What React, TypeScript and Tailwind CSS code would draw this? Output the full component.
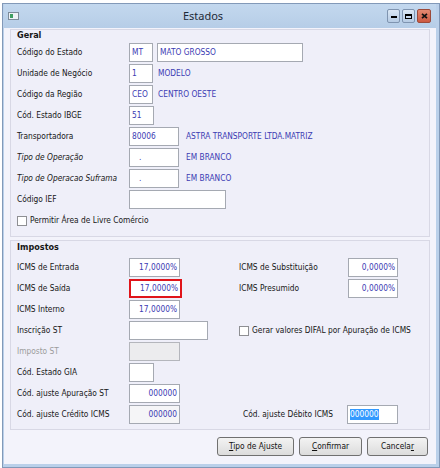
import React from "react";

function Box({
  className = "",
  border = "border border-[#a5a9b2]",
  children,
}: {
  className?: string;
  border?: string;
  children?: React.ReactNode;
}) {
  return (
    <div
      className={`h-[19px] shrink-0 ${border} flex items-center px-[2px] text-[#3b3bb3] whitespace-nowrap overflow-hidden ${className}`}
    >
      {children}
    </div>
  );
}

function Check() {
  return <div className="w-[10px] h-[10px] shrink-0 border border-[#8e8f93] bg-white" />;
}

function Row({
  label,
  italic,
  muted,
  children,
}: {
  label: string;
  italic?: boolean;
  muted?: boolean;
  children?: React.ReactNode;
}) {
  return (
    <div className="flex items-center h-[19px]">
      <div className={`w-[112px] shrink-0 whitespace-nowrap ${italic ? "italic" : ""} ${muted ? "text-[#9c9c9c]" : ""}`}>
        {label}
      </div>
      {children}
    </div>
  );
}

function Value({ children }: { children: React.ReactNode }) {
  return <span className="text-[#3b3bb3] whitespace-nowrap">{children}</span>;
}

export default function App() {
  return (
    <div className="w-[440px] h-[468px] bg-white pt-[3px] pl-[2px] overflow-hidden font-['DejaVu_Sans_Condensed','Liberation_Sans',sans-serif] text-[8.3px] text-[#161616]">
      {/* window frame */}
      <div className="w-[438px] h-[465px] border border-[#8299b8] bg-[#bad0ea] pl-[1px] pr-[3px] pb-[3px] flex flex-col">
        {/* title bar */}
        <div className="h-[24px] flex items-center pl-[4px] pr-[5px] bg-linear-to-b from-[#c3d8ee] to-[#b6cde7]">
          <svg width="11" height="8" viewBox="0 0 11 8" className="shrink-0">
            <rect x="0.5" y="0.5" width="10" height="7" fill="#eef2f6" stroke="#7d8b99" />
            <rect x="2" y="2" width="3" height="4" fill="#3f9e62" />
          </svg>
          <div className="flex-1 text-center font-['Noto_Sans',sans-serif] text-[11px] text-[#1e2a38]">Estados</div>
          <div className="flex items-center gap-[2px]">
            <div className="w-[13px] h-[14px] rounded-[2px] border border-[#7f94b0] bg-linear-to-b from-[#dbe7f4] to-[#b6cbe4] flex items-end justify-center pb-[4px]">
              <div className="w-[6px] h-[2px] bg-black" />
            </div>
            <div className="w-[13px] h-[14px] rounded-[2px] border border-[#7f94b0] bg-linear-to-b from-[#dbe7f4] to-[#b6cbe4] flex items-center justify-center">
              <div className="w-[7px] h-[5px] border border-black border-t-2" />
            </div>
            <div className="w-[14px] h-[14px] rounded-[2px] border border-[#9c4a3a] bg-linear-to-b from-[#e48a72] to-[#cc5840] flex items-center justify-center">
              <svg width="7" height="6" viewBox="0 0 7 6">
                <path d="M1 0.8 L6 5.2 M6 0.8 L1 5.2" stroke="#111" strokeWidth="1.7" />
              </svg>
            </div>
          </div>
        </div>

        {/* client area */}
        <div className="flex-1 bg-[#f3f3fb] flex flex-col">
          {/* Geral */}
          <div className="ml-[6px] mt-[1px] w-[420px] h-[208px] border border-[#d8d8e5] bg-[#efeff9] pl-[6px]">
            <div className="h-[13px] leading-[10px] font-bold text-[9px]">Geral</div>
            <div className="flex flex-col gap-[2px]">
              <Row label="Código do Estado">
                <Box className="w-[24px] bg-white">MT</Box>
                <Box className="w-[146px] ml-[4px] bg-white">MATO GROSSO</Box>
              </Row>
              <Row label="Unidade de Negócio">
                <Box className="w-[24px] bg-white">1</Box>
                <span className="ml-[5px]"><Value>MODELO</Value></span>
              </Row>
              <Row label="Código da Região">
                <Box className="w-[24px] bg-white">CEO</Box>
                <span className="ml-[5px]"><Value>CENTRO OESTE</Value></span>
              </Row>
              <Row label="Cód. Estado IBGE">
                <Box className="w-[25px] bg-white">51</Box>
              </Row>
              <Row label="Transportadora">
                <Box className="w-[50px] bg-white">80006</Box>
                <span className="ml-[7px]"><Value>ASTRA TRANSPORTE LTDA.MATRIZ</Value></span>
              </Row>
              <Row label="Tipo de Operação" italic>
                <Box className="w-[50px] pl-[9px] bg-white">.</Box>
                <span className="ml-[7px]"><Value>EM BRANCO</Value></span>
              </Row>
              <Row label="Tipo de Operacao Suframa" italic>
                <Box className="w-[50px] pl-[9px] bg-white">.</Box>
                <span className="ml-[7px]"><Value>EM BRANCO</Value></span>
              </Row>
              <Row label="Código IEF">
                <Box className="w-[97px] bg-white" />
              </Row>
              <div className="flex items-center h-[19px] gap-[3px]">
                <Check />
                <span>Permitir Área de Livre Comércio</span>
              </div>
            </div>
          </div>

          {/* Impostos */}
          <div className="ml-[6px] mt-[3px] w-[420px] h-[190px] border border-[#d8d8e5] bg-[#efeff9] pl-[6px]">
            <div className="h-[17px] leading-[12px] font-bold text-[9px]">Impostos</div>
            <div className="flex flex-col gap-[2px]">
              <div className="flex items-center h-[19px]">
                <div className="w-[222px] shrink-0">
                  <Row label="ICMS de Entrada">
                    <Box className="w-[51px] justify-end bg-white">17,0000%</Box>
                  </Row>
                </div>
                <div className="w-[109px] shrink-0">ICMS de Substituição</div>
                <Box className="w-[50px] justify-end bg-white">0,0000%</Box>
              </div>
              <div className="flex items-center h-[19px]">
                <div className="w-[222px] shrink-0">
                  <Row label="ICMS de Saída">
                    <Box className="w-[53px] justify-end bg-white" border="border-[2px] border-[#e0141a]">
                      17,0000%
                    </Box>
                  </Row>
                </div>
                <div className="w-[109px] shrink-0">ICMS Presumido</div>
                <Box className="w-[50px] justify-end bg-white">0,0000%</Box>
              </div>
              <Row label="ICMS Interno">
                <Box className="w-[51px] justify-end bg-white">17,0000%</Box>
              </Row>
              <div className="flex items-center h-[19px]">
                <div className="w-[222px] shrink-0">
                  <Row label="Inscrição ST">
                    <Box className="w-[79px] bg-white" />
                  </Row>
                </div>
                <div className="flex items-center gap-[3px]">
                  <Check />
                  <span className="whitespace-nowrap">Gerar valores DIFAL por Apuração de ICMS</span>
                </div>
              </div>
              <Row label="Imposto ST" muted>
                <Box className="w-[51px] bg-[#ececee]" border="border border-[#b4b6bc]" />
              </Row>
              <Row label="Cód. Estado GIA">
                <Box className="w-[25px] bg-white" />
              </Row>
              <Row label="Cód. ajuste Apuração ST">
                <Box className="w-[51px] justify-end bg-white">000000</Box>
              </Row>
              <div className="flex items-center h-[19px]">
                <div className="w-[222px] shrink-0">
                  <Row label="Cód. ajuste Crédito ICMS">
                    <Box className="w-[51px] justify-end bg-[#f5f5f7]">000000</Box>
                  </Row>
                </div>
                <div className="w-[108px] shrink-0 pl-[4px] whitespace-nowrap">Cód. ajuste Débito ICMS</div>
                <Box className="w-[51px] bg-white">
                  <span className="bg-[#3399ff] text-white leading-[11px]">000000</span>
                </Box>
              </div>
            </div>
          </div>

          {/* buttons */}
          <div className="mt-[7px] flex justify-end gap-[5px] pr-[8px]">
            <button className="h-[19px] w-[77px] border border-[#707070] rounded-[3px] bg-linear-to-b from-[#f3f3f3] to-[#dcdcdc] text-[#111]">
              <span className="underline">T</span>ipo de Ajuste
            </button>
            <button className="h-[19px] w-[63px] border border-[#707070] rounded-[3px] bg-linear-to-b from-[#f3f3f3] to-[#dcdcdc] text-[#111]">
              <span className="underline">C</span>onfirmar
            </button>
            <button className="h-[19px] w-[61px] border border-[#707070] rounded-[3px] bg-linear-to-b from-[#f3f3f3] to-[#dcdcdc] text-[#111]">
              Cancela<span className="underline">r</span>
            </button>
          </div>
        </div>
      </div>
    </div>
  );
}
